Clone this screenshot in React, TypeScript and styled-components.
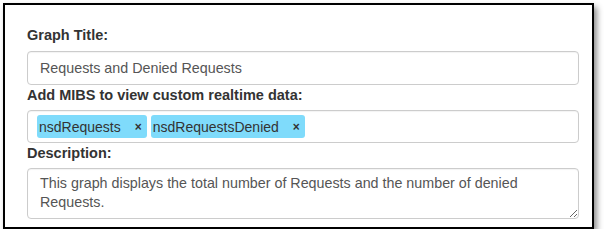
import React from "react";
import styled, { createGlobalStyle } from "styled-components";

const GlobalStyle = createGlobalStyle`
  body {
    margin: 0;
    background: #fff;
    font-family: "Liberation Sans", Arial, sans-serif;
  }
`;

const Frame = styled.div`
  box-sizing: border-box;
  margin: 3px 0 0 3px;
  width: 591px;
  height: 226px;
  border: 2px solid #000;
  box-shadow: 3px 4px 6px rgba(0, 0, 0, 0.45);
  padding: 20px 13px 0 22px;
  display: flex;
  flex-direction: column;
`;

const Label = styled.label<{ $gap?: number }>`
  display: block;
  font-size: 14.5px;
  line-height: 20px;
  font-weight: bold;
  color: #333;
  margin-bottom: ${(p) => p.$gap ?? 5}px;
`;

const Field = styled.div`
  box-sizing: border-box;
  width: 552px;
  border: 1px solid #ccc;
  border-radius: 4px;
  background: #fff;
  box-shadow: inset 0 1px 1px rgba(0, 0, 0, 0.05);
  font-size: 14.3px;
  color: #555;
`;

const TextField = styled(Field)`
  height: 34px;
  padding: 0 12px;
  display: flex;
  align-items: center;
`;

const TagField = styled(Field)`
  height: 33px;
  padding: 0 9px;
  display: flex;
  align-items: center;
  gap: 4px;
`;

const Tag = styled.span`
  display: inline-flex;
  align-items: center;
  height: 23px;
  padding: 0 5px 0 2px;
  background: #7fdbfb;
  border-radius: 3px;
  color: #333;
  font-size: 14px;
`;

const Remove = styled.span`
  margin-left: 14px;
  font-size: 12px;
  font-weight: bold;
  color: #333;
`;

const Area = styled.textarea`
  box-sizing: border-box;
  width: 552px;
  height: 51px;
  border: 1px solid #ccc;
  border-radius: 4px;
  box-shadow: inset 0 1px 1px rgba(0, 0, 0, 0.05);
  padding: 5px 12px;
  font-family: "Liberation Sans", Arial, sans-serif;
  font-size: 14.3px;
  line-height: 19px;
  color: #555;
  resize: vertical;
  outline: none;
  margin: 0;
  display: block;
`;

const tags = ["nsdRequests", "nsdRequestsDenied"];

const App: React.FC = () => {
  return (
    <>
      <GlobalStyle />
      <Frame>
        <Label $gap={6}>Graph Title:</Label>
        <TextField>Requests and Denied Requests</TextField>
        <Label>Add MIBS to view custom realtime data:</Label>
        <TagField>
          {tags.map((t) => (
            <Tag key={t}>
              {t}
              <Remove>×</Remove>
            </Tag>
          ))}
        </TagField>
        <Label>Description:</Label>
        <Area
          readOnly
          defaultValue="This graph displays the total number of Requests and the number of denied Requests."
        />
      </Frame>
    </>
  );
};

export default App;
